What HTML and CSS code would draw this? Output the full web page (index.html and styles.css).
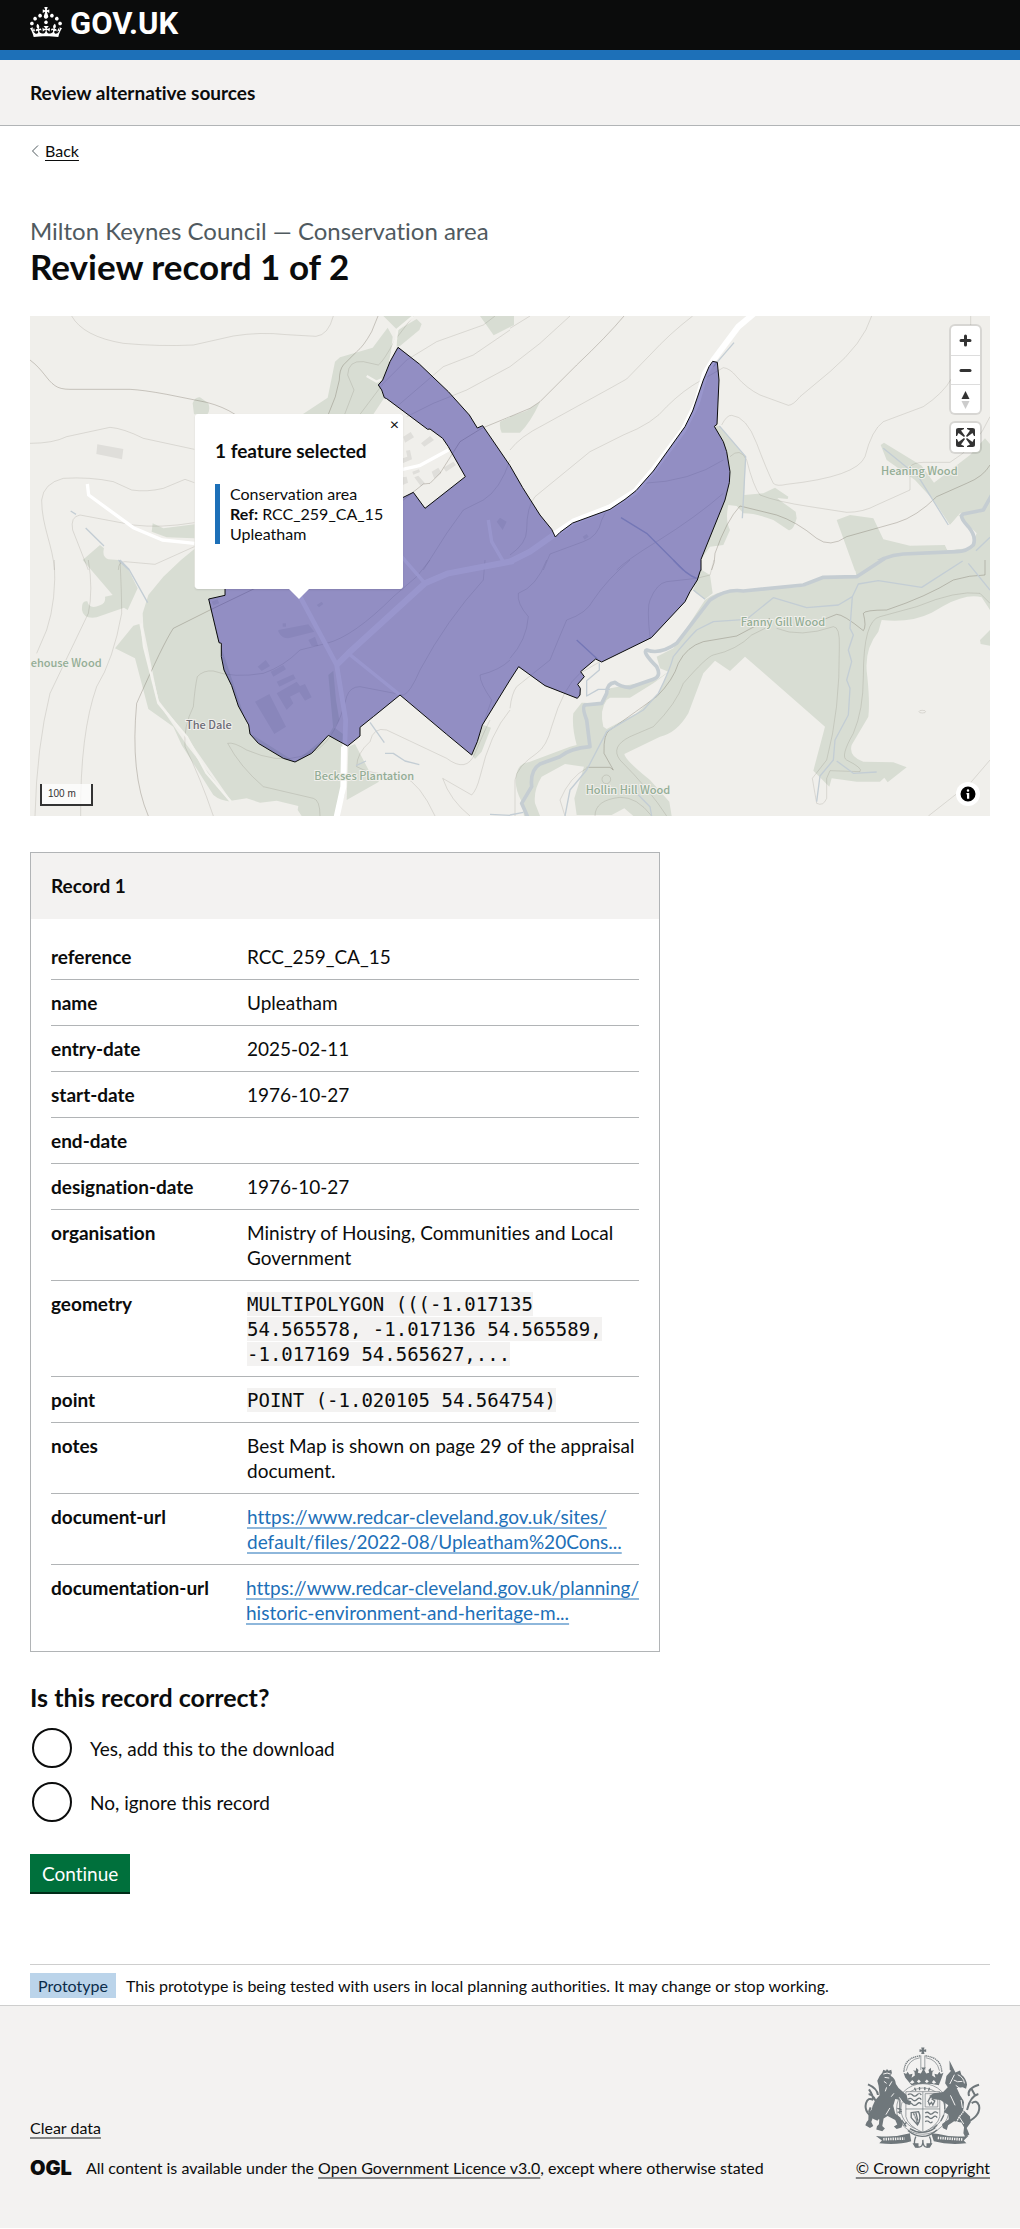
FILE: index.html
```html
<!DOCTYPE html>
<html lang="en">
<head>
<meta charset="utf-8">
<meta name="viewport" content="width=device-width, initial-scale=1">
<title>Review record 1 of 2 - Review alternative sources</title>
<link rel="stylesheet" href="styles.css">
</head>
<body>
<header>
  <div class="masthead">
    <div class="container">
      <a class="logo" href="#">
        <svg class="logo-crown" viewBox="0 0 32 30" aria-hidden="true"><path d="M22.6 10.4c-1 .4-2-.1-2.4-1-.4-.9.1-2 1-2.4.9-.4 2 .1 2.4 1s-.1 2-1 2.4m-5.9 6.7c-.9.4-2-.1-2.4-1-.4-.9.1-2 1-2.4.9-.4 2 .1 2.4 1s-.1 2-1 2.4m10.8-3.7c-1 .4-2-.1-2.4-1-.4-.9.1-2 1-2.4.9-.4 2 .1 2.4 1s0 2-1 2.4m3.3 4.8c-1 .4-2-.1-2.4-1-.4-.9.1-2 1-2.4.9-.4 2 .1 2.4 1s-.1 2-1 2.4M17 4.7l2.3 1.2V2.5l-2.3.7-.2-.2.9-3h-3.4l.9 3-.2.2c-.1.1-2.3-.7-2.3-.7v3.4L15 4.7c.1.1.1.2.2.2l-1.3 4c-.1.2-.1.4-.1.6 0 1.1.8 2 1.9 2.2h.7c1-.2 1.9-1.1 1.9-2.1 0-.2 0-.4-.1-.6l-1.3-4c-.1-.2 0-.2.1-.3m-7.6 5.7c.9.4 2-.1 2.4-1 .4-.9-.1-2-1-2.4-.9-.4-2 .1-2.4 1s0 2 1 2.4m-5 3c.9.4 2-.1 2.4-1 .4-.9-.1-2-1-2.4-.9-.4-2 .1-2.4 1s.1 2 1 2.4m-3.2 4.8c.9.4 2-.1 2.4-1 .4-.9-.1-2-1-2.4-.9-.4-2 .1-2.4 1s0 2 1 2.4m14.8 11c4.4 0 8.6.3 12.3.8 1.1-4.5 2.4-7 3.7-8.8l-2.5-.9c.2 1.3.3 1.9 0 2.7-.4-.4-.8-1.1-1.1-2.3l-1.2 4c.7-.5 1.3-.8 2-.9-1.1 2.5-2.6 3.1-3.5 3-1.1-.2-1.7-1.2-1.5-2.1.3-1.2 1.5-1.5 2.1-.1 1.1-2.3-.8-3-2-2.3 1.9-1.9 2.1-3.5.6-5.6-2.1 1.6-2.1 3.2-1.2 5.5-1.2-1.4-3.2-.6-2.5 1.6.9-1.4 2.1-.5 1.9.8-.2 1.1-1.7 2.1-3.5 1.9-2.7-.2-2.9-2.1-2.9-3.6.7-.1 1.9.5 2.9 1.9l.4-4.3c-1.1 1.1-2.1 1.4-3.2 1.4.4-1.2 2.1-3 2.1-3h-5.4s1.7 1.9 2.1 3c-1.1 0-2.1-.2-3.2-1.4l.4 4.3c1-1.4 2.2-2 2.9-1.9-.1 1.5-.2 3.4-2.9 3.6-1.9.2-3.4-.8-3.5-1.9-.2-1.3 1-2.2 1.9-.8.7-2.3-1.2-3-2.5-1.6.9-2.2.9-3.9-1.2-5.5-1.5 2-1.3 3.7.6 5.6-1.2-.7-3.1 0-2 2.3.6-1.4 1.8-1.1 2.1.1.2.9-.3 1.9-1.5 2.1-.9.2-2.4-.5-3.5-3 .6 0 1.2.3 2 .9l-1.2-4c-.3 1.1-.7 1.9-1.1 2.3-.3-.8-.2-1.4 0-2.7l-2.9.9C1.3 23 2.6 25.5 3.7 30c3.7-.5 7.9-.8 12.3-.8"/></svg>
        <span>GOV.UK</span>
      </a>
    </div>
  </div>
  <div class="service">
    <div class="container"><a class="service-name" href="#">Review alternative sources</a></div>
  </div>
</header>

<div class="container">
  <a class="back" href="#"><svg viewBox="0 0 8 14" aria-hidden="true"><path d="M7 1.5 1.5 7 7 12.5"/></svg><span>Back</span></a>

  <main>
    <span class="caption">Milton Keynes Council — Conservation area</span>
    <h1>Review record 1 of 2</h1>

    <div class="map">
      <svg class="map-canvas" viewBox="90 48 2880 1500" preserveAspectRatio="xMidYMid slice" role="img" aria-label="Map of Upleatham">
        <!-- north west tile -->
        <g>
          <g class="wood">
            <path d="M1150 48H1242L1205 80 1190 88ZM1190 92 1250 57 1265 72 1258 90 1200 138 1190 140ZM1163 83 1118 143 1020 172 1005 185 983 293 908 343H1120L1153 293 1135 255 1148 240 1170 185 1178 110ZM1440 48H1542V75L1481 106ZM578 310Q585 290 600 292L625 310Q632 330 622 343H582ZM458 670 490 685 583 673V715L500 712 455 695ZM248 780 300 735 312 745Q305 770 325 778L355 780 387 812 413 865 383 930 372 923 290 952Q250 958 246 930 244 900 262 904 268 930 300 916 318 910 315 890L338 885Z"/>
          </g>
          <path class="building" d="M292 433 370 447 366 478 289 462ZM1263 430 1290 408 1302 420 1273 440ZM1210 410 1232 396 1242 412 1215 428ZM1295 515 1315 503 1324 518 1303 536ZM1330 503 1360 485 1368 495 1338 515ZM1490 665 1500 653 1520 665 1508 690ZM1237 515 1257 508 1260 516 1240 524ZM1243 532 1255 527 1275 550 1262 558ZM1208 475 1222 470 1218 452 1230 450 1236 478 1208 490ZM1208 532 1220 530 1224 548 1208 555Z"/>
          <path class="contour" d="M215 48Q250 110 370 130 480 140 580 135L700 108Q780 95 860 104L948 109Q985 105 1000 48M90 430Q160 430 200 410L330 382Q370 385 430 415L583 448M583 548 555 538 490 565Q440 577 395 570L340 545Q270 530 190 535 130 550 125 600C125 680 160 740 163 810M583 668Q480 685 400 675L240 645Q210 650 218 690L265 810M583 740 465 793 375 785Q355 785 355 810M1034 343 1062 270 1043 225Q1045 180 1090 185L1135 195Q1150 185 1185 120L1240 48M1080 343 1150 250 1220 180 1310 125 1450 75 1485 48M1190 320 1330 200 1420 165 1530 90M1220 350 1300 310 1400 270 1530 200M1530 480Q1500 570 1450 600L1390 630 1340 700 1270 810"/>
          <path class="contour index" d="M90 180C130 210 140 240 165 257Q180 268 210 268H390Q430 270 500 283L620 307Q670 320 705 343M1134 48 1115 95Q1090 140 1070 155L1030 195Q1018 210 1018 240 1010 290 985 343M1530 350 1445 385 1380 425 1320 520 1290 550 1270 552 1210 600"/>
          <path class="water" d="M212 633 228 643M257 684 312 738M355 780 387 810"/>
          <path class="road minor" d="M262 552 266 585 400 683 487 720 583 730M1208 508 1258 497 1345 450M1465 660 1475 725 1510 785"/>
          <path class="road track" d="M1240 48 1192 88 1185 140M1100 228 1130 245 1145 238M1170 185 1185 120"/>
        </g>
        <!-- north east tile -->
        <g transform="translate(1530 0)">
          <path class="wood" d="M-30 365 0 350 50 332 90 306Q60 370 30 398H-25Q-32 385-30 365ZM612 380 625 377 707 470 703 585 760 580 795 563 835 590 833 597 802 594 812 603 857 635 860 655Q850 695 835 690L790 660Q740 640 700 640L680 618 655 615Q645 660 660 690L640 735 600 740 573 778 645 600 658 548 660 515 650 455 640 425ZM1112 435 1122 428 1235 497 1272 548 1380 465 1425 415 1440 432V590L1415 635 1350 640 1320 675 1270 600 1215 540 1130 480ZM980 660 1020 645 1090 655 1120 718 1200 737 1305 735 1312 750 1380 745 1400 700 1345 645 1415 635 1440 600V812H1035Z"/>
          <path class="clearing" d="M1320 675 1345 648 1392 700 1385 735 1330 750 1312 750 1305 735 1290 730Z"/>
          <path class="building" d="M218 710 230 702 236 710 224 719Z"/>
          <path class="contour" d="M0 85 60 48M0 200 90 130 180 48M0 450Q30 410 100 375L300 265 350 237 420 165Q480 100 548 48M0 765Q50 730 50 690 50 620 75 590L240 455 340 405Q430 370 470 320 520 270 575 240L640 203Q660 205 680 230 710 265 750 285L835 316Q850 315 870 290L960 215Q1060 130 1085 48M635 375Q650 345 665 346 710 350 740 430 770 510 790 550 800 560 830 553 1040 530 1065 470 1085 390 1120 365L1240 320Q1300 280 1325 235M400 550Q540 545 640 480M660 470Q690 440 710 480 730 560 750 585 800 605 900 620L1010 637Q1060 637 1100 615L1200 570V500Q1210 488 1240 487H1320Q1400 440 1440 350M100 810 120 762 220 725Q265 710 275 660L290 630M320 810Q350 780 440 725 560 650 640 580M1382 48V75"/>
          <path class="contour index" d="M0 350 60 325 90 305 200 195Q290 110 342 48M605 810Q615 790 615 760 650 660 690 618L800 645Q860 665 920 715 960 745 1010 710L1160 668Q1220 650 1280 590L1370 550Q1420 530 1440 495"/>
          <path class="river" d="M1445 585 1420 630 1360 642Q1345 648 1375 680 1400 710 1390 735 1370 755 1340 755L1180 762Q1120 765 1060 812"/>
          <path class="water" d="M610 200 672 128M628 378 707 470 697 655M1120 445 1225 530 1315 675M1398 752 1440 712"/>
          <path class="water ditch" d="M333 653 410 700 520 810"/>
          <path class="road" d="M735 38 685 80 610 180 585 220 560 310 520 390 430 510 375 575 300 622 190 665 135 702 60 755 0 785"/>
        </g>
        <!-- south west tile -->
        <g transform="translate(0 780)">
          <path class="wood" d="M583-33 543 0 490 50 445 105 428 160 430 200 475 420 560 530 693 722 740 715 780 728 830 722 895 738 893 750 905 768H1015L1035 700V560L985 525 885 605 750 520 660 250 627 117 673 105V80H583ZM418 192 400 197 345 265 405 295 445 447 520 500 545 555 640 705Q660 722 693 725L560 555 475 430 430 250ZM1045 560 1065 552 1110 638 1137 665 1040 720ZM1450 495 1473 503 1445 575 1425 597 1417 585Z"/>
          <path class="wood" d="M1000 500 1040 530 1020 560 985 526ZM985 345 1000 332 1008 420 1018 480 1000 510Z"/>
          <path class="building" d="M765 425 808 402 858 500 823 522ZM773 320 797 300 810 318 785 333ZM812 335 850 315 858 328 820 350ZM830 365 880 343 887 356 838 380ZM830 400 890 365 900 378 915 372 935 412 915 422 898 396 870 410 880 430 860 450ZM835 210 925 193 943 215 865 235Q845 235 835 215ZM925 240 945 230 955 258 935 258ZM950 135 965 125 970 132 957 142ZM848 190H858V200H848ZM635 125 652 118 658 130 640 136Z"/>
          <path class="contour" d="M163 0Q170 120 140 210L110 280M265 0Q280 90 265 160L150 400Q110 560 105 768M360 0Q365 100 365 160 340 300 290 380 240 520 242 768M640 768Q600 650 555 560 550 500 580 440 585 380 592 350 610 330 640 333 700 355 790 340 850 320 900 270L980 250Q1060 230 1180 110L1250 50 1290 0M960 768Q960 720 940 715L790 680Q720 620 683 550 700 545 740 570 830 610 900 590L950 570Q1010 530 1040 410 1050 380 1080 380L1210 405Q1230 400 1260 330 1340 180 1450 60L1455 0M1305 768Q1260 670 1210 650 1100 640 1070 620 1070 580 1110 545 1120 500 1160 510L1340 595Q1400 640 1425 580 1450 520 1470 480M1410 768Q1350 720 1328 655L1415 705Q1430 690 1440 650 1470 520 1530 450M1530 300Q1500 330 1440 345 1440 370 1475 420L1450 490"/>
          <path class="contour index" d="M765 85 630 150 520 205Q490 250 410 430 390 640 445 768"/>
          <path class="water" d="M360 0 387 28 443 128M1110 487 1153 548M1155 580H1180L1215 603 1258 614M1068 617 1098 603M1470 763 1530 766"/>
          <path class="road track" d="M424 190 432 260 475 430 560 530 620 640 693 725"/>
          <path class="road" d="M1540 3 1345 40 1275 70 1045 280 1010 315M1032 560 1030 680 1008 780"/>
          <path class="road inner" d="M895 100 1010 315 1037 480 1034 570"/>
          <path class="road minor" d="M1205-10 1275 70M1045 280 1200 405"/>
        </g>
        <!-- south east tile -->
        <g transform="translate(1530 780)">
          <path class="wood" d="M1030 0H1440V150L1415 112Q1370 100 1300 138L1265 158Q1200 190 1115 180L1105 215Q1060 270 1072 350 1080 430 1075 470L1025 555Q1015 590 1060 605L1150 607 1190 622 1133 667 1123 653 1110 665H1040L965 655 958 680 910 632 945 500 705 290 660 333 615 302 580 340 535 460Q500 520 450 530L343 582Q345 600 420 660L478 725 485 768H370L343 745 305 765H200L193 715 222 620 165 612 95 650Q70 690 75 730L90 768H42L35 725Q10 680 20 640 25 610 60 605L180 560 200 555Q185 500 190 460L215 428 270 430 300 385 440 360 475 335 450 325 440 290 490 265 585 120Q620 90 680 92L880 80 950 50H1040ZM558 100 585 118 608 100 600 45 570 27 550 90ZM1440 210 1410 240 1412 252 1440 257Z"/>
          <path class="clearing" d="M280 500Q268 450 290 420L300 413H360L430 370 475 337 445 400 380 460 290 507Z"/>
          <path class="contour" d="M110 0Q80 80 25 100 20 130 55 170 50 240 0 295M360 0Q290 60 250 120 230 160 170 180 140 250 120 300L20 380Q5 400 0 445M15 768V660Q20 620 80 580 110 560 125 500 160 380 210 340L270 305M420 235Q410 140 420 120 440 70 470 65L560 55 600 45 612 0M255 768Q255 720 330 712 380 710 425 768M470 768Q420 690 330 600 300 560 360 530L430 500Q500 430 520 370 590 290 610 285 680 270 725 225L765 205M800 205Q870 235 970 200 990 200 988 260 990 450 950 600L907 655 920 730Q940 740 950 715V655L960 632 1050 635Q1060 625 1010 600 990 590 1030 520 1060 450 1060 350 1060 180 1110 170L1220 140Q1340 90 1410 100L1440 130M165 768 150 720Q180 650 230 625M1255 768 1380 670 1440 600"/>
          <path class="contour index" d="M230 622H300L310 630 282 580Q280 520 300 510L440 410Q490 360 505 310 530 260 580 245L680 228 780 175M925 185 980 163Q1000 163 1060 212 1070 200 1060 160 1065 150 1130 150 1250 110 1330 60 1380 45 1425 45V0"/>
          <circle class="contour" cx="289" cy="658" r="13"/>
          <ellipse class="contour" cx="1237" cy="455" rx="10" ry="4"/>
          <path class="river" d="M1125-5 1040 50 940 52 880 75 700 93Q650 85 600 120L500 250Q450 285 410 270 395 275 440 320 455 350 430 358 380 375 360 383 330 380 315 367 290 370 290 400L275 430 225 435Q215 440 230 480L240 560Q180 565 150 590L90 612Q60 630 65 680L35 730 55 775"/>
          <path class="water" d="M550 90 585 118M268 310V330L230 362V408L265 388H300M165 768 180 690 230 630 290 515 400 450 445 400Q480 330 490 290 530 240 560 210L610 185 710 178 790 113 890 143 985 135 1027 110 1045 72 1105 62 1235 82 1358 3M1375 10 1440 90M1027 110 1020 205 1030 225 1015 270 1025 305 1010 360 1020 385 1015 465 975 540 970 600 930 648 920 725M980 603 1030 640 1100 636M0 765 40 757M380 700 420 740 425 768"/>
          <path class="water ditch" d="M490 0Q530 45 560 55M200 240 262 297"/>
        </g>

        <path class="area" d="M1194 142 1258 192 1345 275 1408 345 1432 384 1448 377 1530 497 1568 563 1620 645 1655 688 1666 711 1680 697 1718 669 1830 628 1875 598 1908 572 1960 513 2055 380 2078 333 2110 240 2127 200 2138 184 2152 187 2157 240 2151 373 2143 379 2170 425 2180 455 2190 515 2188 548 2175 600 2103 778V810L2100 815 2092 840 2070 875 2055 905 1954 1013 1805 1086 1787 1077 1742 1115 1753 1130 1733 1153 1741 1165 1740 1185 1732 1195 1635 1157 1556 1100 1530 1140 1447 1275 1432 1325 1415 1365 1340 1303 1200 1185 1120 1250 1080 1282V1308L1043 1338 985 1306 935 1360 885 1386 850 1375 775 1330 750 1302 746 1275 715 1218 695 1157 672 1110 664 1070V1030L657 1028 626 897 675 886V750L1208 593 1240 577 1275 625 1396 530 1345 440 1328 415 1290 387 1283 388 1160 296 1153 293 1145 270 1135 255 1148 240 1170 185Z"/>

        <g class="place">
          <text x="92" y="1102">ehouse Wood</text>
          <text class="locality" x="558" y="1288">The Dale</text>
          <text x="943" y="1440">Beckses Plantation</text>
          <text x="2643" y="526">Heaning Wood</text>
          <text x="2222" y="977">Fanny Gill Wood</text>
          <text x="1757" y="1483">Hollin Hill Wood</text>
        </g>
      </svg>

      <section class="popup">
        <button class="popup-close" type="button" aria-label="Close popup">×</button>
        <h2>1 feature selected</h2>
        <p>Conservation area<br><b>Ref:</b> RCC_259_CA_15<br>Upleatham</p>
      </section>

      <div class="controls">
        <div class="control-group">
          <button type="button" aria-label="Zoom in"><svg viewBox="0 0 29 29"><path d="M14.5 10v9M10 14.5h9" class="bar"/></svg></button>
          <button type="button" aria-label="Zoom out"><svg viewBox="0 0 29 29"><path d="M10 14.5h9" class="bar"/></svg></button>
          <button type="button" aria-label="Reset bearing to north"><svg viewBox="0 0 29 29"><path d="m10.5 14 4-8 4 8z"/><path d="m10.5 16 4 8 4-8z" class="south"/></svg></button>
        </div>
        <div class="control-group">
          <button type="button" aria-label="Enter fullscreen"><svg viewBox="0 0 29 29"><path d="M24 16v5.500c0 1.750-.75 2.500-2.500 2.500H16v-1l3-1.500-4-5.500 1-1 5.500 4 1.500-3zM6 16l1.500 3 5.500-4 1 1-4 5.500 3 1.500v1H7.500C5.750 24 5 23.250 5 21.500V16zm7-11v1l-3 1.500 4 5.500-1 1-5.500-4L6 13H5V7.500C5 5.750 5.750 5 7.500 5zm11 2.500c0-1.750-.75-2.500-2.500-2.500H16v1l3 1.500-4 5.500 1 1 5.500-4 1.500 3h1z"/></svg></button>
        </div>
      </div>

      <div class="scale">100 m</div>
      <button class="attribution" type="button" aria-label="Toggle attribution"><svg viewBox="0 0 24 24"><path fill-rule="evenodd" d="M4.500 12a7.500 7.500 0 1 0 15 0 7.500 7.500 0 0 0-15 0m8.750-3.500a1.250 1.250 0 1 0-2.500 0 1.250 1.250 0 0 0 2.500 0M11 11a.75.75 0 0 0 0 1.500v4.250h2.250V11z"/></svg></button>
    </div>

    <section class="card">
      <h2>Record 1</h2>
      <dl>
        <div><dt>reference</dt><dd>RCC_259_CA_15</dd></div>
        <div><dt>name</dt><dd>Upleatham</dd></div>
        <div><dt>entry-date</dt><dd>2025-02-11</dd></div>
        <div><dt>start-date</dt><dd>1976-10-27</dd></div>
        <div><dt>end-date</dt><dd></dd></div>
        <div><dt>designation-date</dt><dd>1976-10-27</dd></div>
        <div><dt>organisation</dt><dd>Ministry of Housing, Communities and Local Government</dd></div>
        <div><dt>geometry</dt><dd><code>MULTIPOLYGON (((-1.017135 54.565578, -1.017136 54.565589, -1.017169 54.565627,...</code></dd></div>
        <div><dt>point</dt><dd><code>POINT (-1.020105 54.564754)</code></dd></div>
        <div><dt>notes</dt><dd>Best Map is shown on page 29 of the appraisal document.</dd></div>
        <div><dt>document-url</dt><dd><a href="#">https://www.redcar-cleveland.gov.uk/sites/<br>default/files/2022-08/Upleatham%20Cons...</a></dd></div>
        <div><dt>documentation-url</dt><dd><a href="#">https://www.redcar-cleveland.gov.uk/planning/<br>historic-environment-and-heritage-m...</a></dd></div>
      </dl>
    </section>

    <form>
      <fieldset>
        <legend>Is this record correct?</legend>
        <div class="radio"><input type="radio" name="correct" id="correct-yes" value="yes"><label for="correct-yes">Yes, add this to the download</label></div>
        <div class="radio"><input type="radio" name="correct" id="correct-no" value="no"><label for="correct-no">No, ignore this record</label></div>
      </fieldset>
      <button class="continue" type="submit">Continue</button>
    </form>
  </main>

  <div class="phase"><strong>Prototype</strong><span>This prototype is being tested with users in local planning authorities. It may change or stop working.</span></div>
</div>

<footer>
  <div class="container footer-row">
    <div class="footer-meta">
      <a href="#">Clear data</a>
      <div class="licence"><span class="ogl">OGL</span><span>All content is available under the <a href="#">Open Government Licence v3.0</a>, except where otherwise stated</span></div>
    </div>
    <div class="footer-crest">
      <svg viewBox="68 78 376 306" aria-hidden="true">
        <!-- crown -->
        <path d="M252 82h10l-2 7 7-2v9l-7-2 2 8h-10l2-8-7 2v-9l7 2zM204 172l-5-14 8 4 4-7 6 8 9-2-3 12 10-7-1-11-5-4 9 1 1-9 7 7-2 8 9 2 6-11-5-7h14l-5 7 6 11 9-2-2-8 7-7 1 9 9-1-5 4-1 11 10 7-3-12 9 2 6-8 4 7 8-4-5 14-9 24q-41-9-82 0z"/>
        <path class="line" d="M200 155Q202 112 250 107M314 155Q312 112 264 107" stroke-width="4" stroke-dasharray="4 2"/>
        <path class="line" d="M207 152Q214 118 248 113M307 152Q300 118 266 113M251 106V150M263 106V150" stroke-width="2"/>
        <path class="gap" d="M218 188l7-8 7 7-7 4zM239 184l6-6 6 6-6 5zM263 184l6-6 6 6-6 5zM284 187l6-7 7 8-7 3z"/>
        <!-- garter and shield -->
        <ellipse class="line" cx="257" cy="267" rx="79" ry="76" stroke-width="2"/>
        <ellipse class="line" cx="257" cy="267" rx="66" ry="63" stroke-width="2"/>
        <path class="line" d="M188 240v42M193 300l14 20M232 203l4 9M247 201v10M263 201v10M277 203l-3 9M323 246v22M320 285l-9 18M300 315l-10 10M180 265l13 4M181 277l13-3M208 307l-9 10" stroke-width="4"/>
        <path class="shield" d="M206 215H308V290Q302 318 257 338 212 318 206 290Z"/>
        <path class="line" d="M206 215H308V290Q302 318 257 338 212 318 206 290ZM257 215V335M206 267H308M264 221h38v40h-38z" stroke-width="2"/>
        <path class="line" d="M212 224q8-6 14 1t14-1 12 1M212 238q8-6 14 1t14-1 12 1M212 252q8-6 14 1t14-1 12 1M264 279q7-5 12 1t12-1 14 1M264 292q7-5 12 1t12-1 12 1M264 305q7-5 12 1t10-1M222 278l22-3q10 20-3 40l-19-22zM229 280l12 30M236 278l6 24M272 246l6-12 8-7 6 6-7 4 8 6-6 12-4-8-6 7-3-8" stroke-width="4"/>
        <path class="light" d="M230 285l7 19M212 219h40M268 300h26" stroke-width="2"/>
        <!-- lion -->
        <path d="M135 158l3-9 8 3 3-5 5 5 8-3 2 10-4 8q15 8 16 25l8 12 24 21 4 15 10 4-3 11-14-3-16-12-15-3-6 20 6 24 15 12 8 16-4 14-15 4-8-7 10-6-6-14-23-12-12 8-4 22 8 8-8 8-18-5 2-10 6-6 1-14-20-4-4 11 6 12-10 6-14-8 4-10 5-6 1-22 9-9q5-24 24-43l-3-28-4-16 7-14z"/>
        <path class="light" d="M138 162q12-6 22 0M142 172l14 2M140 184l8 6M164 184l-8 14M148 202l-4 12M158 264l-12 20M170 220l-8 10M186 232l10 14" stroke-width="3"/>
        <path class="line" d="M122 300Q78 282 86 250 92 230 108 240M122 262Q112 224 94 222M122 225Q120 205 92 193M95 208Q110 230 106 238M100 262L95 276" stroke-width="6"/>
        <!-- unicorn -->
        <path d="M337 121l18 36 14-6 4 13q14 10 17 30l-3 12-10-4-18 2 10 22 12 18-2 26 20 20 2 18-12 16 8 20-12 8-6-12 2-18-8-14-22-4-18 12-4 14-12-6-2-12 20-14-1-14-14-8 14-20-24-16-20-2-14-10 14-8 28-4 14-14-8-12 4-22 14-16-4-2z"/>
        <path class="light" d="M352 164l-14 28M362 164q18 8 20 26M350 180q10 8 26 4M356 196l14 10M372 240l4 24M340 226l14 30M366 290l14 22" stroke-width="3"/>
        <path class="line" d="M392 306Q432 286 426 256 418 238 404 250M390 270Q400 228 424 222M396 228Q388 206 426 194M404 208L414 226" stroke-width="6"/>
        <path class="chain" d="M378 234Q392 262 372 284T358 340M346 340q12-14 24 0"/>
        <!-- motto scroll -->
        <path d="M116 348q50 6 92-6l10-2 4 24q-40 12-96 6l8-8zM394 348q-46 6-90-6l-22-2 8 24q44 12 98 6l-8-8z"/>
        <path class="line" d="M212 332Q256 368 300 330M218 326Q256 350 294 324M236 350q-12 30 10 32 12-1 11-22 0 21 12 22 20-6 8-32" stroke-width="4"/>
        <path d="M226 370h18v14h-10zM268 370h18l-8 14h-10z"/>
        <path class="light" d="M138 358l64-2M302 354l76 5" stroke-width="8" stroke-dasharray="4 3"/>
      </svg>
      <a href="#">© Crown copyright</a>
    </div>
  </div>
</footer>
</body>
</html>
```
FILE: styles.css
```css
* { box-sizing: border-box; }

body {
  margin: 0;
  background: #fff;
  color: #0b0c0c;
  font-family: Lato, "Liberation Sans", Arial, sans-serif;
  font-size: 19px;
  line-height: 25px;
  font-variant-ligatures: none;
}

h1, h2, p, dl, dd { margin: 0; }
button, input { font: inherit; margin: 0; }

.container {
  max-width: 1020px;
  margin: 0 auto;
  padding: 0 30px;
}

/* Header */
.masthead {
  background: #0b0c0c;
  border-bottom: 10px solid #1d70b8;
}
.logo {
  display: inline-flex;
  align-items: center;
  gap: 8px;
  height: 50px;
  padding-bottom: 6px;
  color: #fff;
  font-family: Roboto, "Liberation Sans", sans-serif;
  font-size: 31px;
  line-height: 30px;
  font-weight: 700;
  text-decoration: none;
  vertical-align: top;
}
.logo-crown { width: 32px; height: 30px; fill: currentColor; }
.logo span { padding-top: 4px; }

.service {
  background: #f3f2f1;
  border-bottom: 1px solid #b1b4b6;
  padding: 20px 0;
}
.service-name { color: inherit; font-weight: 700; text-decoration: none; }

.back {
  display: flex;
  align-items: center;
  gap: 6px;
  width: max-content;
  margin: 15px 0;
  padding-left: 1px;
  color: #0b0c0c;
  font-size: 16px;
  line-height: 20px;
  text-decoration: none;
}
.back svg { width: 8px; height: 14px; fill: none; stroke: #505a5f; }
.back span { text-decoration: underline; text-underline-offset: 3px; }

/* Page heading */
main { padding-top: 40px; }
.caption { display: block; color: #505a5f; font-size: 24px; line-height: 30px; }
h1 { margin-bottom: 30px; font-size: 35px; line-height: 40px; }

/* Map */
.map {
  position: relative;
  height: 500px;
  margin-bottom: 36px;
  overflow: hidden;
  background: #f0efeb;
}
.map-canvas { display: block; width: 100%; height: 100%; }
.map-canvas path, .map-canvas circle, .map-canvas ellipse { stroke-linejoin: round; }
.wood { fill: #d8ddd3; }
.clearing { fill: #f0efeb; }
.building { fill: #dfdeda; }
.contour { fill: none; stroke: #5a5040; stroke-opacity: .15; stroke-width: 3; }
.contour.index { stroke-opacity: .28; }
.river { fill: none; stroke: #c5cdd2; stroke-width: 11; }
.water { fill: none; stroke: #c3cdd4; stroke-width: 4; }
.water.ditch { stroke: #b4bfd0; }
.road { fill: none; stroke: #fff; stroke-width: 18; }
.road.inner { stroke-width: 14; }
.road.minor { stroke-width: 10; }
.road.track { stroke: #f3f2ee; stroke-width: 7; }
.area { fill: #332e9c; fill-opacity: .5; stroke: #0b0c0c; stroke-width: 3; }
.place {
  fill: #93ad95;
  stroke: #f0efeb;
  stroke-width: 6;
  paint-order: stroke;
  font: 500 33px "Noto Sans CJK SC", "Noto Sans", sans-serif;
}
.locality { fill: #6c6c76; }

.popup {
  position: absolute;
  left: 165px;
  top: 98px;
  width: 208px;
  padding: 24px 20px 45px;
  background: #fff;
  border-radius: 3px;
  box-shadow: 0 1px 2px rgba(0, 0, 0, .1);
}
.popup::after {
  content: "";
  position: absolute;
  left: 50%;
  top: 100%;
  margin-left: -10px;
  border: 10px solid transparent;
  border-top-color: #fff;
  border-bottom: 0;
}
.popup h2 { margin-bottom: 21px; font-size: 19px; line-height: 25px; white-space: nowrap; }
.popup p {
  padding-left: 10px;
  border-left: 5px solid #1d70b8;
  font-size: 16px;
  line-height: 20px;
  white-space: nowrap;
}
.popup-close {
  position: absolute;
  right: 0;
  top: 0;
  padding: 0 4px;
  border: 0;
  background: none;
  color: #0b0c0c;
  font-size: 16px;
  line-height: 20px;
}

.controls {
  position: absolute;
  right: 10px;
  top: 10px;
  display: grid;
  gap: 10px;
}
.control-group { border-radius: 4px; background: #fff; box-shadow: 0 0 0 2px rgba(0, 0, 0, .1); }
.control-group button {
  display: block;
  width: 29px;
  height: 29px;
  padding: 0;
  border: 0;
  background: none;
}
.control-group button + button { border-top: 1px solid #ddd; }
.control-group svg { display: block; width: 29px; height: 29px; fill: #333; }
.control-group .bar { stroke: #333; stroke-width: 3; stroke-linecap: round; }
.control-group .south { fill: #ccc; }

.scale {
  position: absolute;
  left: 10px;
  bottom: 10px;
  width: 53px;
  height: 22px;
  padding: 0 6px;
  border: 2px solid #333;
  border-top: 0;
  background: rgba(255, 255, 255, .75);
  color: #333;
  font: 10px/20px "Liberation Sans", Arial, sans-serif;
}
.attribution {
  position: absolute;
  right: 10px;
  bottom: 10px;
  width: 24px;
  height: 24px;
  padding: 0;
  border: 0;
  border-radius: 12px;
  background: #fff;
}
.attribution svg { display: block; }

/* Record */
.card {
  width: calc(66.6667% - 10px);
  margin-bottom: 30px;
  border: 1px solid #b1b4b6;
}
.card h2 {
  padding: 20px 20px 21px;
  background: #f3f2f1;
  font-size: 19px;
  line-height: 25px;
}
dl { padding: 15px 20px 16px; }
dl > div {
  display: grid;
  grid-template-columns: 1fr 2fr;
  padding: 10px 0;
  border-bottom: 1px solid #b1b4b6;
}
dl > div:last-child { border-bottom: 0; }
dt { font-weight: 700; }
dd a { color: #1d70b8; text-decoration-color: #8eb7db; text-decoration-thickness: 2px; text-underline-offset: 3px; white-space: nowrap; }
code { padding: 1px 0; background: #f3f2f1; font: inherit; font-family: "DejaVu Sans Mono", monospace; line-height: 19px; }

/* Question */
fieldset { min-width: 0; margin: 0 0 30px; padding: 0; border: 0; }
legend { margin-bottom: 14px; padding: 0; font-size: 25px; line-height: 30px; font-weight: 700; }
.radio { display: flex; align-items: center; min-height: 44px; padding-left: 2px; }
.radio + .radio { margin-top: 10px; }
.radio input {
  appearance: none;
  width: 40px;
  height: 40px;
  border: 2px solid #0b0c0c;
  border-radius: 50%;
  background: #fff;
}
.radio input:checked { box-shadow: inset 0 0 0 8px #fff; background: #0b0c0c; }
.radio label { padding: 7px 18px; }

.continue {
  display: block;
  padding: 8px 10px 7px;
  border: 2px solid transparent;
  background: #00703c;
  box-shadow: 0 2px 0 #002d18;
  color: #fff;
  line-height: 19px;
}

/* Phase banner */
.phase {
  display: flex;
  align-items: center;
  gap: 10px;
  margin-top: 72px;
  padding: 8px 0 7px;
  border-top: 1px solid #cecece;
  font-size: 16px;
  line-height: 20px;
}
.phase strong { padding: 3px 8px 2px; background: #bbd4ea; color: #0c2d4a; font-weight: 400; }

/* Footer */
footer { padding: 40px 0 50px; border-top: 1px solid #cecece; background: #f3f2f1; font-size: 16px; line-height: 20px; }
footer a { color: #0b0c0c; text-decoration-color: #858686; text-decoration-thickness: 2px; text-underline-offset: 3px; }
.footer-row { display: flex; align-items: flex-end; justify-content: space-between; gap: 20px; }
.footer-meta { display: grid; gap: 20px; justify-items: start; }
.licence { display: flex; align-items: center; gap: 14px; }
.ogl { font-family: Inter, "Liberation Sans", sans-serif; font-size: 20px; font-weight: 900; }
.footer-crest { display: grid; gap: 10px; justify-items: center; }
.footer-crest svg { width: 125px; height: 102px; fill: #6f777b; }
.footer-crest .line { fill: none; stroke: #6f777b; }
.footer-crest .light { fill: none; stroke: #f3f2f1; }
.footer-crest .gap, .footer-crest .shield { fill: #f3f2f1; }
.footer-crest .chain { fill: none; stroke: #f3f2f1; stroke-width: 4; stroke-dasharray: 5 2; }
```
